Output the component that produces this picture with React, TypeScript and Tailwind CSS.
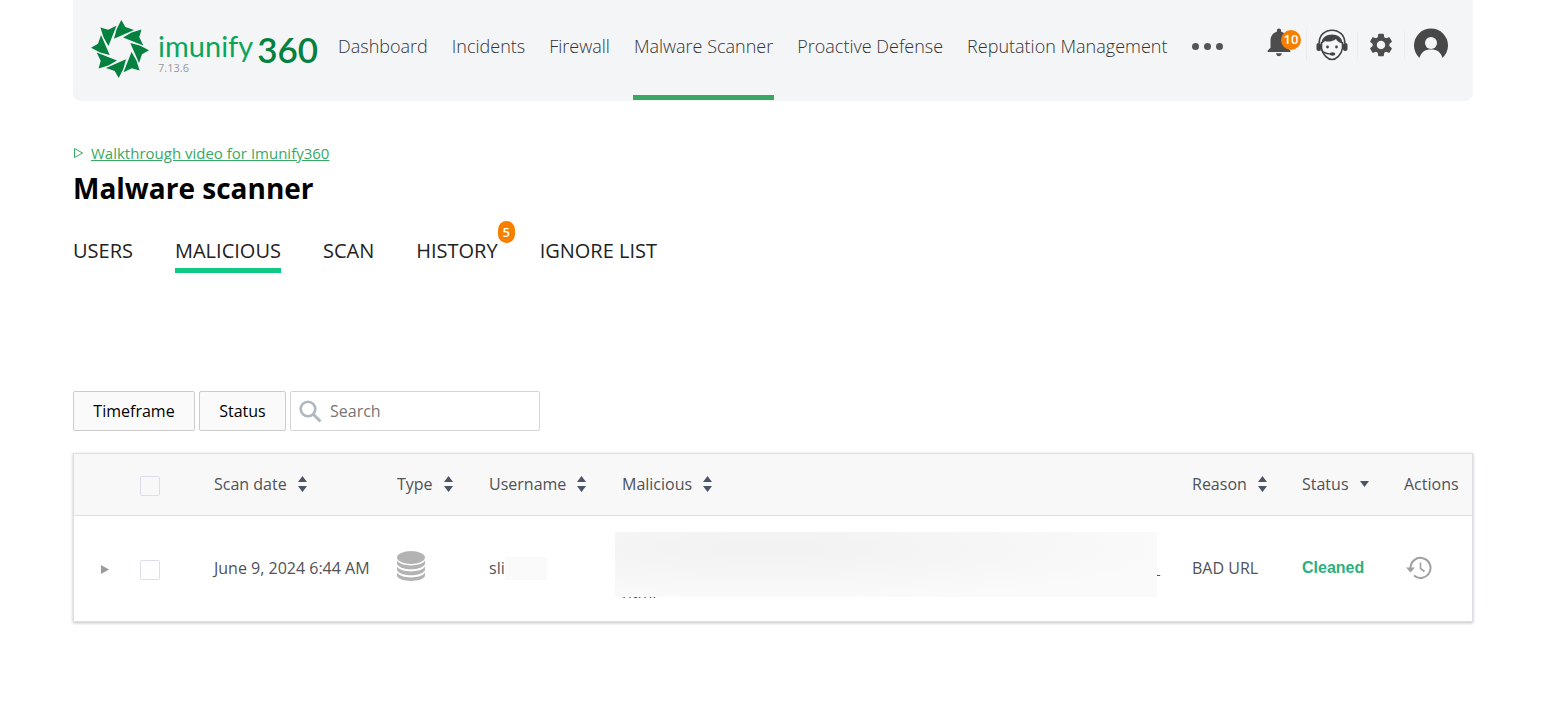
import { clsx } from "clsx";
import { MdNotifications, MdSettings } from "react-icons/md";

const navItems = [
  { label: "Dashboard" },
  { label: "Incidents" },
  { label: "Firewall" },
  { label: "Malware Scanner", active: true },
  { label: "Proactive Defense" },
  { label: "Reputation Management" },
];

const tabs = [
  { label: "USERS" },
  { label: "MALICIOUS", active: true },
  { label: "SCAN" },
  { label: "HISTORY", badge: 5 },
  { label: "IGNORE LIST" },
];

const columns = [
  { label: "Scan date", width: "w-[183px]" },
  { label: "Type", width: "w-[92px]" },
  { label: "Username", width: "w-[133px]" },
  { label: "Malicious", width: "" },
  { label: "Reason", width: "w-[110px]" },
];

const blades = [0, 45, 90, 135, 180, 225, 270, 315];

function Logo() {
  return (
    <a href="#home" aria-label="imunify 360" className="flex items-start shrink-0 w-[246px]">
      <svg viewBox="-29 -29 58 58" className="w-[58px] h-[58px] mt-5 shrink-0" fill="#04803f">
        {blades.map((angle) => (
          <path key={angle} d="M1.3 -29 L5.3 -22 L14 -19 L-6 -10.3 L-3.4 -19.8 Z" transform={`rotate(${angle})`} />
        ))}
      </svg>
      <div className="ml-[9px] mt-6 font-['Lato',sans-serif]">
        <div className="flex items-start h-[38px] whitespace-nowrap">
          <span className="text-[29px] leading-[44px] text-[#0aa55c]">imunify</span>
          <span className="ml-1 text-[35px] leading-[50px] font-semibold text-[#04803f]">360</span>
        </div>
        <div className="text-[11px] leading-3 text-[#999] font-['Open_Sans',sans-serif]">7.13.6</div>
      </div>
    </a>
  );
}

function SupportIcon() {
  return (
    <svg viewBox="0 0 32 32" className="w-8 h-8" fill="none" stroke="#444" strokeWidth="1.6">
      <path d="M3.2 14 C3.2 -3 28.8 -3 28.8 14" />
      <path d="M5.5 13 V19 C6.5 26 12 30.5 16 30.5 C20 30.5 25.5 26 26.5 19 V13" />
      <path d="M5.5 14.5 C5.5 2.5 26.5 2.5 26.5 14.5 C23 13.5 21 12.5 20 10 C16 13 11 13 9 12 C8 13 7 14 5.5 14.5 Z" fill="#444" stroke="none" />
      <rect x="0.5" y="14" width="4.5" height="8" rx="2" fill="#444" stroke="none" />
      <rect x="27" y="14" width="4.5" height="8" rx="2" fill="#444" stroke="none" />
      <circle cx="11.5" cy="18" r="1.4" fill="#444" stroke="none" />
      <circle cx="20.5" cy="18" r="1.4" fill="#444" stroke="none" />
      <path d="M5 21 C8 24 12 25 15 25" strokeWidth="1.2" />
      <ellipse cx="16.5" cy="25" rx="2.8" ry="1.7" fill="#444" stroke="none" />
    </svg>
  );
}

function AccountIcon() {
  return (
    <svg viewBox="0 0 34 30" className="w-[34px] h-[30px]">
      <path d="M5.5 30 A17 17 0 1 1 28.5 30 C27 24 23 21.5 17 21.5 C11 21.5 7 24 5.5 30 Z" fill="#484848" />
      <circle cx="17" cy="15" r="6" fill="#f4f5f7" />
    </svg>
  );
}

function SearchIcon() {
  return (
    <svg viewBox="0 0 23 23" className="w-[23px] h-[23px] shrink-0" fill="none" stroke="#b0b8bf">
      <circle cx="9" cy="9" r="7.3" strokeWidth="2.6" />
      <path d="M14 14 L21.5 21.5" strokeWidth="3" />
    </svg>
  );
}

function DatabaseIcon() {
  return (
    <svg viewBox="0 0 28 30" className="w-7 h-[30px]" fill="#b3b3b3">
      <ellipse cx="14" cy="6.5" rx="14" ry="6.5" />
      <path d="M0 9.5 C4 16 24 16 28 9.5 V13 C25 20 3 20 0 13 Z" />
      <path d="M0 15.5 C4 22 24 22 28 15.5 V19 C25 26 3 26 0 19 Z" />
      <path d="M0 21.5 C4 28 24 28 28 21.5 V25 C25 31.5 3 31.5 0 25 Z" />
    </svg>
  );
}

function RestoreIcon() {
  return (
    <svg viewBox="0 0 26 24" className="w-[26px] h-6" fill="none" stroke="#a0a0a0" strokeWidth="2">
      <path d="M4.5 12 A10 10 0 1 1 8 19.5" />
      <path d="M0 11.5 H9 L4.5 16.5 Z" fill="#a0a0a0" stroke="none" />
      <path d="M14.5 6.5 V12.5 L18.5 15.5" strokeWidth="1.6" />
    </svg>
  );
}

function SortIcon() {
  return (
    <svg viewBox="0 0 9 16" className="w-[9px] h-4" fill="#4b5568">
      <path d="M4.5 0 L9 6 H0 Z M0 10 H9 L4.5 16 Z" />
    </svg>
  );
}

function Header() {
  return (
    <header className="flex h-[101px] rounded-b-lg bg-[#f4f5f7] pl-[18px] pr-[25px] text-[#333]">
      <Logo />
      <nav className="flex gap-[22px]">
        {navItems.map((item) => (
          <a
            key={item.label}
            href="#nav"
            className={clsx(
              "px-px pt-[34px] text-[18px] leading-6 font-light whitespace-nowrap border-b-[5px] mb-px",
              item.active ? "border-[#38a962]" : "border-transparent"
            )}
          >
            {item.label}
          </a>
        ))}
      </nav>
      <button type="button" aria-label="More" className="flex items-center gap-[5px] h-[92px] ml-6">
        <span className="size-[7px] rounded-full bg-[#555]" />
        <span className="size-[7px] rounded-full bg-[#555]" />
        <span className="size-[7px] rounded-full bg-[#555]" />
      </button>
      <div className="flex items-center h-[90px] ml-auto">
        <button type="button" aria-label="Notifications" className="relative pr-2.5 pb-1.5">
          <MdNotifications className="size-[34px] text-[#4d4d4d]" />
          <span className="absolute left-[19px] top-[5px] flex items-center justify-center size-5 rounded-full bg-[#f77f00] text-white text-[13px] font-semibold">
            10
          </span>
        </button>
        <button type="button" aria-label="Support" className="px-[9px] border-l border-[#ebecee]">
          <SupportIcon />
        </button>
        <button type="button" aria-label="Settings" className="px-[9px] border-x border-[#ebecee]">
          <MdSettings className="size-7 text-[#4d4d4d]" />
        </button>
        <button type="button" aria-label="Account" className="ml-[9px] pb-1">
          <AccountIcon />
        </button>
      </div>
    </header>
  );
}

function Tabs() {
  return (
    <nav className="flex gap-[42px] mt-[30px]">
      {tabs.map((tab) => (
        <a
          key={tab.label}
          href="#tab"
          className={clsx(
            "relative text-[20px] leading-7 whitespace-nowrap text-[#222] border-b-[5px] pb-[3px]",
            tab.active ? "border-[#10c985]" : "border-transparent"
          )}
        >
          {tab.label}
          {tab.badge && (
            <span className="absolute -right-[17px] -top-4 w-[17px] h-[22px] rounded-full bg-[#f77f00] text-white text-[13px] leading-[22px] font-semibold text-center">
              {tab.badge}
            </span>
          )}
        </a>
      ))}
    </nav>
  );
}

function Filters() {
  return (
    <div className="flex gap-1 mt-[118px]">
      <button type="button" className="h-10 w-[122px] border border-[#ccc] rounded-xs bg-[#fafafa] text-black">
        Timeframe
      </button>
      <button type="button" className="h-10 w-[87px] border border-[#ccc] rounded-xs bg-[#fafafa] text-black">
        Status
      </button>
      <label className="flex items-center w-[250px] h-10 pl-2 border border-[#d5d5d5] rounded-xs bg-white">
        <SearchIcon />
        <input
          type="search"
          aria-label="Search"
          placeholder="Search"
          className="w-full ml-2 outline-none placeholder:text-[#757575]"
        />
      </label>
    </div>
  );
}

function Checkbox({ label }: { label: string }) {
  return (
    <input
      type="checkbox"
      aria-label={label}
      className="block appearance-none size-5 mt-1 border border-[#dcdeee] rounded-xs checked:bg-[#38a962]"
    />
  );
}

function ScanTable() {
  return (
    <div className="mt-[22px] border border-[#dcdfe4] shadow-[0_1px_3px_rgba(0,0,0,0.25)]">
      <table className="w-full table-fixed text-left text-[#4f5257]">
        <thead>
          <tr className="h-[61px] bg-[#f8f8f8] border-b border-[#dee0e4]">
            <th className="w-[66px]" />
            <th className="w-[74px]">
              <Checkbox label="Select all" />
            </th>
            {columns.map((col) => (
              <th key={col.label} className={clsx("p-0 font-normal", col.width)}>
                <button type="button" className="flex items-center gap-[11px]">
                  {col.label}
                  <SortIcon />
                </button>
              </th>
            ))}
            <th className="w-[102px] p-0 font-normal">
              <button type="button" className="flex items-center gap-[11px]">
                Status
                <svg viewBox="0 0 9 6" className="w-[9px] h-1.5" fill="#4b5568">
                  <path d="M0 0 H9 L4.5 6 Z" />
                </svg>
              </button>
            </th>
            <th className="w-[68px] p-0 font-normal">Actions</th>
          </tr>
        </thead>
        <tbody>
          <tr className="h-[106px]">
            <td>
              <button type="button" aria-label="Expand row" className="block ml-[27px] mt-0.5">
                <svg viewBox="0 0 8 9" className="w-2 h-[9px]" fill="#9b9b9b">
                  <path d="M0 0 L8 4.5 L0 9 Z" />
                </svg>
              </button>
            </td>
            <td>
              <Checkbox label="Select row" />
            </td>
            <td className="whitespace-nowrap">June 9, 2024 6:44 AM</td>
            <td className="pb-1">
              <DatabaseIcon />
            </td>
            <td>
              <div className="flex items-center">
                sli
                <span className="w-[42px] h-[23px] bg-[#fafafa]" />
              </div>
            </td>
            <td>
              <div className="relative h-[72px] leading-6">
                <div className="absolute right-8 top-6">_</div>
                <div className="absolute left-0 top-12">html</div>
                <div className="absolute -left-[7px] right-[35px] top-0 h-[65px] bg-[radial-gradient(ellipse_at_28%_25%,#f1f1f1,#f5f5f5_35%,#fafafa_75%)]" />
              </div>
            </td>
            <td>BAD URL</td>
            <td className="font-['Liberation_Sans',Arial,sans-serif] font-bold text-[#2bb07f]">Cleaned</td>
            <td>
              <button type="button" aria-label="Restore" className="block ml-0.5">
                <RestoreIcon />
              </button>
            </td>
          </tr>
        </tbody>
      </table>
    </div>
  );
}

export default function App() {
  return (
    <div className="min-h-screen bg-white font-['Open_Sans',sans-serif] text-base">
      <div className="pl-[73px] pr-[74px]">
        <Header />
        <main>
          <a href="#video" className="inline-flex items-center gap-[7px] mt-10 text-[15px] leading-6 text-[#38a962]">
            <svg viewBox="0 0 11 12" className="w-[11px] h-3" fill="none" stroke="#38a962">
              <path d="M1.5 1.5 L9.5 6 L1.5 10.5 Z" />
            </svg>
            <span className="underline">Walkthrough video for Imunify360</span>
          </a>
          <h1 className="mt-1 text-[28px] leading-[38px] font-bold text-black">Malware scanner</h1>
          <Tabs />
          <Filters />
          <ScanTable />
        </main>
      </div>
    </div>
  );
}
